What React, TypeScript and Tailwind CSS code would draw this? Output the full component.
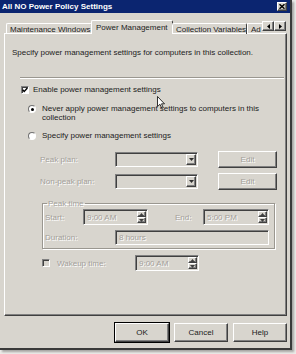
import React from "react";

const raised =
  "border border-t-white border-l-white border-r-[#404040] border-b-[#404040] shadow-[inset_-1px_-1px_0_#808080]";
const sunken =
  "border border-t-[#808080] border-l-[#808080] border-r-white border-b-white shadow-[inset_1px_1px_0_#404040]";
const dim = "text-[#a3a09a] [text-shadow:1px_1px_0_#ffffff]";

function Tab({ label, w, active }: { label: string; w: string; active?: boolean }) {
  return (
    <div
      className={`${w} ${
        active ? "h-[14px] bg-[#d8d5ce] -mx-[1px] px-[4px]" : "h-[11px] px-[3px]"
      } flex items-center border-t border-l border-t-white border-l-white border-r border-r-[#404040] rounded-t-[2px] whitespace-nowrap`}
    >
      {label}
    </div>
  );
}

function Check({ checked, disabled }: { checked?: boolean; disabled?: boolean }) {
  return (
    <div className={`w-[8px] h-[8px] shrink-0 ${sunken} ${disabled ? "bg-[#d8d5ce]" : "bg-white"} flex items-center justify-center`}>
      {checked && (
        <svg width="6" height="6" viewBox="0 0 6 6">
          <path d="M0.6 2.8 L2.2 4.5 L5.4 1.1" stroke="#000" strokeWidth="1.4" fill="none" />
        </svg>
      )}
    </div>
  );
}

function Radio({ on }: { on?: boolean }) {
  return (
    <div className="w-[8px] h-[8px] shrink-0 rounded-full border border-t-[#707070] border-l-[#707070] border-r-white border-b-white bg-white flex items-center justify-center">
      {on && <div className="w-[3px] h-[3px] rounded-full bg-black" />}
    </div>
  );
}

function Combo() {
  return (
    <div className={`w-[83px] h-[15px] ${sunken} bg-[#d8d5ce] flex justify-end p-[1px]`}>
      <div className={`w-[10px] h-full ${raised} bg-[#d8d5ce] flex items-center justify-center`}>
        <svg width="5" height="3" viewBox="0 0 5 3">
          <path d="M0 0 H5 L2.5 3Z" fill="#303030" />
        </svg>
      </div>
    </div>
  );
}

function Btn({ label, w, disabled, def }: { label: string; w: string; disabled?: boolean; def?: boolean }) {
  return (
    <div
      className={`${w} ${disabled ? "h-[17px]" : "h-[19px]"} ${
        def ? "outline outline-1 outline-black" : ""
      } ${raised} bg-[#d8d5ce] flex items-center justify-center ${disabled ? dim : ""}`}
    >
      {label}
    </div>
  );
}

function TimeBox({ w, value }: { w: string; value: string }) {
  return (
    <div className={`${w} h-[16px] ${sunken} bg-[#d8d5ce] flex items-center p-[1px]`}>
      <span className={`flex-1 pl-[2px] ${dim}`}>{value}</span>
      <div className="w-[9px] h-full flex flex-col">
        <div className={`flex-1 ${raised} bg-[#d8d5ce] flex items-center justify-center`}>
          <svg width="5" height="3" viewBox="0 0 5 3">
            <path d="M0 3 H5 L2.5 0Z" fill="#404040" />
          </svg>
        </div>
        <div className={`flex-1 ${raised} bg-[#d8d5ce] flex items-center justify-center`}>
          <svg width="5" height="3" viewBox="0 0 5 3">
            <path d="M0 0 H5 L2.5 3Z" fill="#404040" />
          </svg>
        </div>
      </div>
    </div>
  );
}

export default function App() {
  return (
    <div className="relative w-[296px] h-[354px] bg-[#ecebe8] font-['Liberation_Sans',Arial,sans-serif] text-[8px] leading-[9px] text-[#1c1c1c]">
      <div className="w-[292px] h-[350px] bg-[#d8d5ce] flex flex-col border-r-2 border-b-2 border-r-[#3a3a3a] border-b-[#3a3a3a] shadow-[2px_2px_2px_rgba(0,0,0,0.3)]">
        {/* Title bar */}
        <div className="h-[13px] bg-[#0b2570] flex items-center justify-between pl-[2px] pr-[3px]">
          <span className="text-white font-bold">All NO Power Policy Settings</span>
          <div className={`w-[10px] h-[9px] ${raised} bg-[#d8d5ce] flex items-center justify-center`}>
            <svg width="6" height="5" viewBox="0 0 6 5">
              <path d="M0.5 0.3 L5.5 4.7 M5.5 0.3 L0.5 4.7" stroke="#000" strokeWidth="1.5" />
            </svg>
          </div>
        </div>

        {/* Tabs */}
        <div className="relative z-10 mt-[7px] -mb-[1px] h-[14px] flex items-end pl-[6px]">
          <Tab label="Maintenance Windows" w="w-[86px]" />
          <Tab label="Power Management" w="w-[82px]" active />
          <Tab label="Collection Variables" w="w-[75px]" />
          <div className="w-[15px] h-[11px] pl-[3px] border-t border-l border-t-white border-l-white whitespace-nowrap flex items-center">
            Ad
          </div>
          <div className="flex mb-[3px]">
            <div className={`w-[12px] h-[10px] ${raised} bg-[#d8d5ce] flex items-center justify-center`}>
              <svg width="3" height="5" viewBox="0 0 3 5">
                <path d="M3 0 V5 L0 2.5Z" fill="#000" />
              </svg>
            </div>
            <div className={`w-[12px] h-[10px] ${raised} bg-[#d8d5ce] flex items-center justify-center`}>
              <svg width="3" height="5" viewBox="0 0 3 5">
                <path d="M0 0 V5 L3 2.5Z" fill="#000" />
              </svg>
            </div>
          </div>
        </div>

        {/* Tab panel */}
        <div className={`ml-[4px] w-[283px] h-[283px] ${raised} flex flex-col`}>
          <p className="mt-[14px] ml-[7px]">
            Specify power management settings for computers in this collection.
          </p>
          <div className="mt-[20px] ml-[15px] mr-[2px] h-[2px] border-t border-t-[#9a9790] border-b border-b-white" />

          <div className="mt-[6px] ml-[16px] h-[9px] flex items-center gap-[4px]">
            <Check checked />
            <span>Enable power management settings</span>
          </div>

          <div className="mt-[10px] ml-[23px] flex items-start gap-[6px]">
            <div className="mt-[1px]">
              <Radio on />
            </div>
            <span className="w-[222px]">
              Never apply power management settings to computers in this collection
            </span>
          </div>

          <div className="mt-[9px] ml-[23px] h-[9px] flex items-center gap-[6px]">
            <Radio />
            <span>Specify power management settings</span>
          </div>

          <div className="mt-[11px] ml-[35px] h-[17px] flex items-center">
            <span className={`w-[75px] ${dim}`}>Peak plan:</span>
            <Combo />
            <div className="ml-[20px]">
              <Btn label="Edit" w="w-[59px]" disabled />
            </div>
          </div>

          <div className="mt-[5px] ml-[35px] h-[17px] flex items-center">
            <span className={`w-[75px] ${dim}`}>Non-peak plan:</span>
            <Combo />
            <div className="ml-[20px]">
              <Btn label="Edit" w="w-[59px]" disabled />
            </div>
          </div>

          <fieldset className="mt-[9px] ml-[37px] w-[233px] border border-[#9a9790] shadow-[1px_1px_0_#ffffff,inset_1px_1px_0_#ffffff] pb-[3px]">
            <legend className={`ml-[4px] px-[1px] ${dim}`}>Peak time</legend>
            <div className="mt-[1px] pl-[2px] h-[16px] flex items-center">
              <span className={`w-[38px] ${dim}`}>Start:</span>
              <TimeBox w="w-[65px]" value="9:00 AM" />
              <span className={`ml-[27px] w-[28px] ${dim}`}>End:</span>
              <TimeBox w="w-[66px]" value="5:00 PM" />
            </div>
            <div className="mt-[5px] pl-[2px] h-[15px] flex items-center">
              <span className={`w-[70px] ${dim}`}>Duration:</span>
              <div className={`w-[154px] h-[15px] ${sunken} bg-[#d8d5ce] flex items-center pl-[3px]`}>
                <span className={dim}>8 hours</span>
              </div>
            </div>
          </fieldset>

          <div className="mt-[6px] ml-[37px] h-[16px] flex items-center">
            <Check disabled />
            <span className={`ml-[7px] w-[78px] ${dim}`}>Wakeup time:</span>
            <TimeBox w="w-[64px]" value="9:00 AM" />
          </div>
        </div>

        {/* Dialog buttons */}
        <div className="mt-[7px] pr-[3px] flex justify-end gap-[5px]">
          <Btn label="OK" w="w-[54px]" def />
          <Btn label="Cancel" w="w-[54px]" />
          <Btn label="Help" w="w-[54px]" />
        </div>
      </div>

      {/* Mouse pointer */}
      <svg className="absolute left-[157px] top-[96px]" width="8" height="13" viewBox="0 0 8 13">
        <path d="M0.5 0.5 V10.5 L3 8.3 L4.8 12.3 L6.2 11.6 L4.5 7.8 H7.5 Z" fill="#fff" stroke="#000" strokeWidth="0.8" />
      </svg>
    </div>
  );
}
